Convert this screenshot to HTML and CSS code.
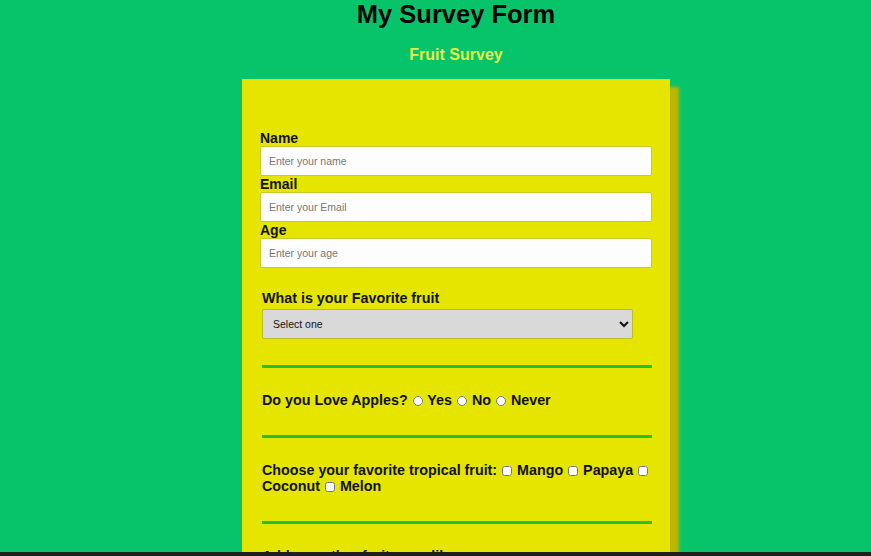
FILE: index.html
```html
<!DOCTYPE html>
<html lang="en">
<head>
<meta charset="utf-8">
<title>My Survey Form</title>
<link rel="stylesheet" href="styles.css">
</head>
<body>
<div class="page">
  <h1 class="title">My Survey Form</h1>
  <h2 class="subtitle">Fruit Survey</h2>
  <form class="card">
    <label class="field-label" for="name">Name</label>
    <input class="text-input" id="name" type="text" placeholder="Enter your name">
    <label class="field-label" for="email">Email</label>
    <input class="text-input" id="email" type="email" placeholder="Enter your Email">
    <label class="field-label" for="age">Age</label>
    <input class="text-input" id="age" type="number" placeholder="Enter your age">

    <div class="block block-first">
      <p class="question">What is your Favorite fruit</p>
      <select class="dropdown">
        <option>Select one</option>
        <option>Apple</option>
        <option>Banana</option>
        <option>Orange</option>
      </select>
    </div>

    <div class="block">
      <p class="question">Do you Love Apples? <input class="radio" type="radio" name="love"> Yes <input class="radio" type="radio" name="love"> No <input class="radio" type="radio" name="love"> Never</p>
    </div>

    <div class="block">
      <p class="question">Choose your favorite tropical fruit: <input class="check" type="checkbox"> Mango <input class="check" type="checkbox"> Papaya <input class="check" type="checkbox"> Coconut <input class="check" type="checkbox"> Melon</p>
    </div>

    <div class="block block-last">
      <p class="question">Add any other fruits you like</p>
    </div>
  </form>
</div>
<div class="bottom-strip"></div>
</body>
</html>
```

FILE: styles.css
```css
html, body {
  margin: 0;
  padding: 0;
}

body {
  background: #07c46b;
  font-family: "Liberation Sans", Arial, sans-serif;
  color: #111;
  overflow: hidden;
  height: 556px;
}

.page {
  display: flex;
  flex-direction: column;
  align-items: center;
  padding-left: 41px;
}

.title {
  margin: 0;
  font-size: 25.5px;
  line-height: 28px;
  font-weight: bold;
  color: #050505;
}

.subtitle {
  margin: 18px 0 0;
  font-size: 16px;
  line-height: 18px;
  font-weight: bold;
  color: #e4f046;
}

.card {
  margin-top: 15px;
  width: 428px;
  box-sizing: border-box;
  background: #e5e500;
  padding: 51px 18px 40px;
  box-shadow: 9px 8px 3px #bab600;
  display: flex;
  flex-direction: column;
}

.field-label {
  font-size: 14px;
  line-height: 16px;
  font-weight: bold;
}

.text-input {
  width: 100%;
  height: 30px;
  box-sizing: border-box;
  border: 1px solid #caca2a;
  border-radius: 2px;
  background: #fdfdfd;
  padding: 0 8px;
  font-family: "Liberation Sans", Arial, sans-serif;
  font-size: 10.5px;
  color: #333;
  outline: none;
}

.text-input::placeholder {
  color: #777;
}

.block {
  margin-left: 2px;
  padding: 24px 0 27px;
  border-bottom: 3px solid #24c22a;
}

.block-first {
  padding-top: 22px;
  padding-bottom: 26px;
}

.block-last {
  border-bottom: none;
}

.question {
  margin: 0;
  font-size: 14.3px;
  line-height: 16px;
  font-weight: bold;
}

.dropdown {
  display: block;
  margin-top: 3px;
  width: 95%;
  height: 30px;
  background: #d9d9d9;
  border: 1px solid #bdbd2c;
  border-radius: 2px;
  padding: 0 6px;
  font-family: "Liberation Sans", Arial, sans-serif;
  font-size: 10.5px;
  color: #111;
}

.radio,
.check {
  width: 10px;
  height: 10px;
  margin: 0 1px;
  vertical-align: -1px;
}

.bottom-strip {
  position: fixed;
  left: 0;
  right: 0;
  bottom: 0;
  height: 4px;
  background: #1e1e1e;
}
```
